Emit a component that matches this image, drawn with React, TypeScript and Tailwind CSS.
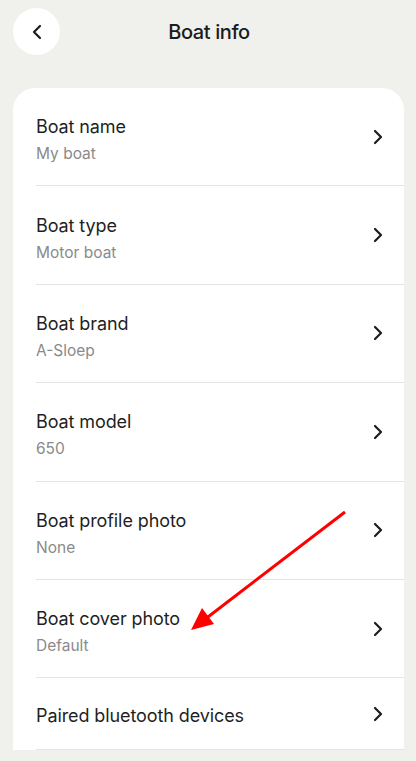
import React from "react";

type Row = { title: string; value?: string };

const rows: Row[] = [
  { title: "Boat name", value: "My boat" },
  { title: "Boat type", value: "Motor boat" },
  { title: "Boat brand", value: "A-Sloep" },
  { title: "Boat model", value: "650" },
  { title: "Boat profile photo", value: "None" },
  { title: "Boat cover photo", value: "Default" },
  { title: "Paired bluetooth devices" },
];

const Chevron = ({ left = false }: { left?: boolean }) => (
  <svg width="10" height="16" viewBox="0 0 10 16" fill="none">
    <path
      d={left ? "M8 2L2 8l6 6" : "M2 2l6 6-6 6"}
      stroke="#1c1c1c"
      strokeWidth="2.2"
      strokeLinecap="round"
      strokeLinejoin="round"
    />
  </svg>
);

const InfoRow = ({ row }: { row: Row }) => {
  return (
    <div className="pl-[23px]">
      <div
        className={`flex items-center justify-between border-b border-[#e4e4e2] pr-[21px] ${
          row.value ? "h-[98.4px]" : "h-[72px]"
        }`}
      >
        <div className={`flex flex-col ${row.value ? "pt-[6px]" : "pt-[5px]"}`}>
          <span className="text-[18px] leading-[26px] tracking-[-0.1px] text-[#1f1f1f]">{row.title}</span>
          {row.value && (
            <span className="mt-[3px] text-[15.5px] leading-[22px] text-[#8a8a8a]">{row.value}</span>
          )}
        </div>
        <Chevron />
      </div>
    </div>
  );
};

export default function App() {
  return (
    <div
      className="relative h-[761px] w-[416px] overflow-hidden bg-[#f0f0ec]"
      style={{ fontFamily: "Inter, 'Noto Sans', sans-serif" }}
    >
      <div className="relative flex h-[88px] items-start justify-center pt-[8px]">
        <button className="absolute left-[13px] top-[8px] flex h-[47px] w-[47px] items-center justify-center rounded-full bg-white">
          <Chevron left />
        </button>
        <h1 className="mt-[9px] pl-[2px] text-[20px] font-medium leading-[30px] tracking-[-0.4px] text-[#1c1c1c]">
          Boat info
        </h1>
      </div>
      <div className="mx-[13px] mr-[12px] rounded-t-[22px] bg-white">
        {rows.map((r) => (
          <InfoRow key={r.title} row={r} />
        ))}
      </div>
      <svg className="pointer-events-none absolute left-0 top-0" width="416" height="761">
        <line x1="345" y1="512" x2="204" y2="620" stroke="#ff0000" strokeWidth="3" />
        <polygon points="191,630 202,608 214,624" fill="#ff0000" />
      </svg>
    </div>
  );
}
